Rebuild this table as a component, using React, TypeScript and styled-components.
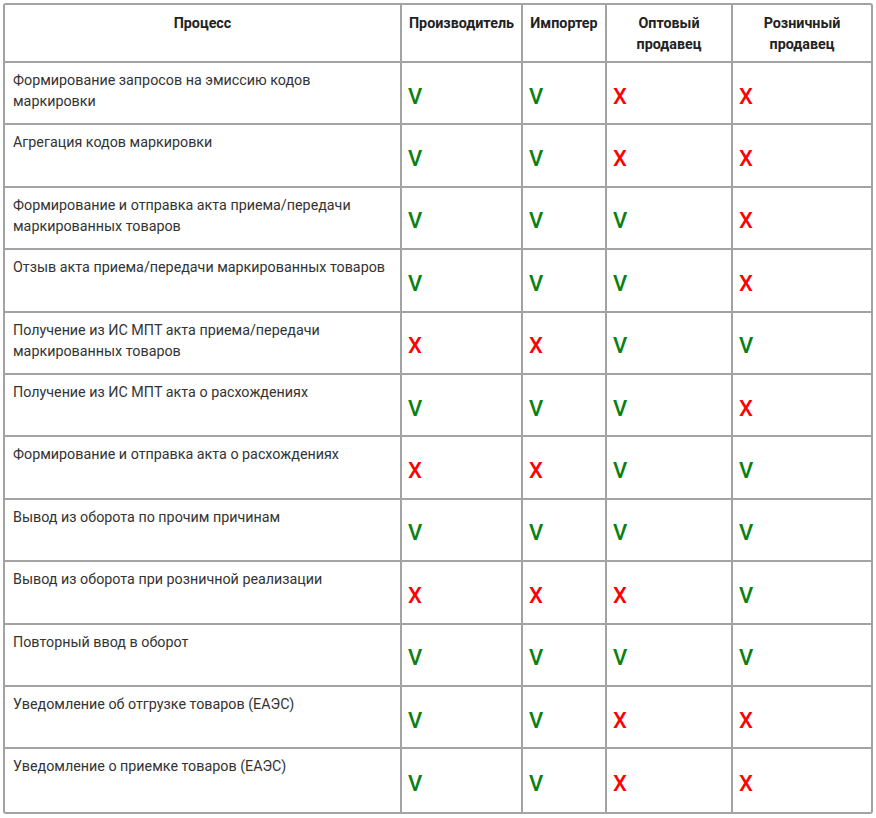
import React from "react";
import styled, { createGlobalStyle } from "styled-components";

const GlobalStyle = createGlobalStyle`
  html, body {
    margin: 0;
    padding: 0;
    background: #ffffff;
  }
  body {
    font-family: Roboto, "Liberation Sans", Arial, sans-serif;
  }
`;

const Page = styled.div`
  padding: 3px;
`;

const Frame = styled.div`
  width: 870px;
  box-sizing: border-box;
  border: 2px solid #a3a3a3;
  border-radius: 3px;
  overflow: hidden;
`;

const Table = styled.table`
  width: 100%;
  table-layout: fixed;
  border-collapse: separate;
  border-spacing: 0;
`;

const HeadCell = styled.th<{ $w: number; $last?: boolean }>`
  width: ${({ $w }) => $w}px;
  height: 58px;
  box-sizing: border-box;
  padding: 8px 2px 0;
  vertical-align: top;
  text-align: center;
  font-size: 14.3px;
  line-height: 21px;
  font-weight: 700;
  color: #222;
  border-right: ${({ $last }) => ($last ? "none" : "2px solid #a3a3a3")};
  border-bottom: 2px solid #a3a3a3;
`;

const Cell = styled.td<{ $last?: boolean; $lastRow?: boolean }>`
  height: 62.4px;
  box-sizing: border-box;
  border-right: ${({ $last }) => ($last ? "none" : "2px solid #a3a3a3")};
  border-bottom: ${({ $lastRow }) => ($lastRow ? "none" : "2px solid #a3a3a3")};
`;

const ProcessCell = styled(Cell)`
  padding: 7px 12px 0 8px;
  vertical-align: top;
  font-size: 14.3px;
  line-height: 21px;
  color: #333;
`;

const MarkCell = styled(Cell)`
  padding: 7px 6px 0;
  vertical-align: middle;
`;

const Mark = styled.span<{ $ok: boolean }>`
  font-size: 22px;
  line-height: 24px;
  font-weight: 500;
  color: ${({ $ok }) => ($ok ? "#0a8012" : "#ff0000")};
`;

const columns = [
  { title: "Процесс", width: 397 },
  { title: "Производитель", width: 121 },
  { title: "Импортер", width: 84 },
  { title: "Оптовый продавец", width: 126 },
  { title: "Розничный продавец", width: 138 },
];

const rows: [string, string][] = [
  ["Формирование запросов на эмиссию кодов маркировки", "VVXX"],
  ["Агрегация кодов маркировки", "VVXX"],
  ["Формирование и отправка акта приема/передачи маркированных товаров", "VVVX"],
  ["Отзыв акта приема/передачи маркированных товаров", "VVVX"],
  ["Получение из ИС МПТ акта приема/передачи маркированных товаров", "XXVV"],
  ["Получение из ИС МПТ акта о расхождениях", "VVVX"],
  ["Формирование и отправка акта о расхождениях", "XXVV"],
  ["Вывод из оборота по прочим причинам", "VVVV"],
  ["Вывод из оборота при розничной реализации", "XXXV"],
  ["Повторный ввод в оборот", "VVVV"],
  ["Уведомление об отгрузке товаров (ЕАЭС)", "VVXX"],
  ["Уведомление о приемке товаров (ЕАЭС)", "VVXX"],
];

const App = () => {
  return (
    <Page>
      <GlobalStyle />
      <Frame>
        <Table>
          <thead>
            <tr>
              {columns.map((c, i) => (
                <HeadCell key={c.title} $w={c.width} $last={i === columns.length - 1}>
                  {c.title}
                </HeadCell>
              ))}
            </tr>
          </thead>
          <tbody>
            {rows.map(([name, marks], r) => {
              const lastRow = r === rows.length - 1;
              return (
                <tr key={name}>
                  <ProcessCell $lastRow={lastRow}>{name}</ProcessCell>
                  {marks.split("").map((m, i) => (
                    <MarkCell key={i} $last={i === 3} $lastRow={lastRow}>
                      <Mark $ok={m === "V"}>{m === "V" ? "V" : "X"}</Mark>
                    </MarkCell>
                  ))}
                </tr>
              );
            })}
          </tbody>
        </Table>
      </Frame>
    </Page>
  );
};

export default App;
